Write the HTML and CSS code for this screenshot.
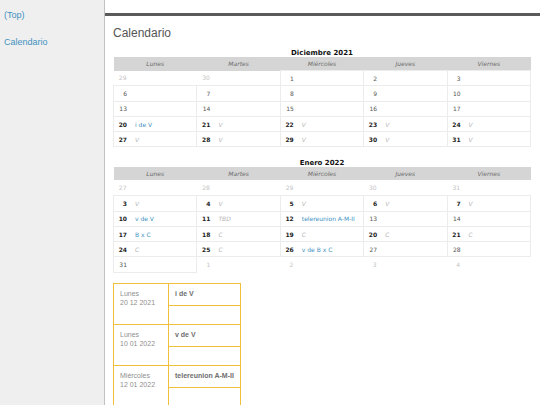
FILE: index.html
```html
<!DOCTYPE html>
<html lang="es">
<head>
<meta charset="utf-8">
<title>Calendario</title>
<link rel="stylesheet" href="styles.css">
</head>
<body>
<nav class="sidebar">
  <a class="side-link top" href="#">(Top)</a>
  <a class="side-link" href="#">Calendario</a>
</nav>
<main class="main">
  <div class="topspace"></div>
  <div class="bar"></div>
  <div class="content">
    <h1 class="title">Calendario</h1>

    <table class="cal">
      <caption>Diciembre 2021</caption>
      <thead>
        <tr><th>Lunes</th><th>Martes</th><th>Miércoles</th><th>Jueves</th><th>Viernes</th></tr>
      </thead>
      <tbody>
        <tr>
          <td class="other"><span class="d">29</span></td>
          <td class="other"><span class="d">30</span></td>
          <td><span class="d">1</span></td>
          <td><span class="d">2</span></td>
          <td><span class="d">3</span></td>
        </tr>
        <tr>
          <td><span class="d">6</span></td>
          <td><span class="d">7</span></td>
          <td><span class="d">8</span></td>
          <td><span class="d">9</span></td>
          <td><span class="d">10</span></td>
        </tr>
        <tr>
          <td><span class="d">13</span></td>
          <td><span class="d">14</span></td>
          <td><span class="d">15</span></td>
          <td><span class="d">16</span></td>
          <td><span class="d">17</span></td>
        </tr>
        <tr>
          <td><span class="d b">20</span><a class="ev" href="#">i de V</a></td>
          <td><span class="d b">21</span><span class="mu">V</span></td>
          <td><span class="d b">22</span><span class="mu">V</span></td>
          <td><span class="d b">23</span><span class="mu">V</span></td>
          <td><span class="d b">24</span><span class="mu">V</span></td>
        </tr>
        <tr>
          <td><span class="d b">27</span><span class="mu">V</span></td>
          <td><span class="d b">28</span><span class="mu">V</span></td>
          <td><span class="d b">29</span><span class="mu">V</span></td>
          <td><span class="d b">30</span><span class="mu">V</span></td>
          <td><span class="d b">31</span><span class="mu">V</span></td>
        </tr>
      </tbody>
    </table>

    <table class="cal">
      <caption>Enero 2022</caption>
      <thead>
        <tr><th>Lunes</th><th>Martes</th><th>Miércoles</th><th>Jueves</th><th>Viernes</th></tr>
      </thead>
      <tbody>
        <tr>
          <td class="other"><span class="d">27</span></td>
          <td class="other"><span class="d">28</span></td>
          <td class="other"><span class="d">29</span></td>
          <td class="other"><span class="d">30</span></td>
          <td class="other"><span class="d">31</span></td>
        </tr>
        <tr>
          <td><span class="d b">3</span><span class="mu">V</span></td>
          <td><span class="d b">4</span><span class="mu">V</span></td>
          <td><span class="d b">5</span><span class="mu">V</span></td>
          <td><span class="d b">6</span><span class="mu">V</span></td>
          <td><span class="d b">7</span><span class="mu">V</span></td>
        </tr>
        <tr>
          <td><span class="d b">10</span><a class="ev" href="#">v de V</a></td>
          <td><span class="d b">11</span><span class="mu">TBD</span></td>
          <td><span class="d b">12</span><a class="ev" href="#">telereunion A-M-II</a></td>
          <td><span class="d">13</span></td>
          <td><span class="d">14</span></td>
        </tr>
        <tr>
          <td><span class="d b">17</span><a class="ev" href="#">B x C</a></td>
          <td><span class="d b">18</span><span class="mu">C</span></td>
          <td><span class="d b">19</span><span class="mu">C</span></td>
          <td><span class="d b">20</span><span class="mu">C</span></td>
          <td><span class="d b">21</span><span class="mu">C</span></td>
        </tr>
        <tr>
          <td><span class="d b">24</span><span class="mu">C</span></td>
          <td><span class="d b">25</span><span class="mu">C</span></td>
          <td><span class="d b">26</span><a class="ev" href="#">v de B x C</a></td>
          <td><span class="d">27</span></td>
          <td><span class="d">28</span></td>
        </tr>
        <tr>
          <td><span class="d">31</span></td>
          <td class="other"><span class="d">1</span></td>
          <td class="other"><span class="d">2</span></td>
          <td class="other"><span class="d">3</span></td>
          <td class="other"><span class="d">4</span></td>
        </tr>
      </tbody>
    </table>

    <table class="list">
      <tbody>
        <tr>
          <td class="when" rowspan="2">Lunes<br>20 12 2021</td>
          <td class="what">i de V</td>
        </tr>
        <tr><td class="blank"></td></tr>
        <tr>
          <td class="when" rowspan="2">Lunes<br>10 01 2022</td>
          <td class="what">v de V</td>
        </tr>
        <tr><td class="blank"></td></tr>
        <tr>
          <td class="when" rowspan="2">Miércoles<br>12 01 2022</td>
          <td class="what">telereunion A-M-II</td>
        </tr>
        <tr><td class="blank"></td></tr>
        <tr>
          <td class="when" rowspan="2"></td>
          <td class="what"></td>
        </tr>
        <tr><td class="blank"></td></tr>
      </tbody>
    </table>
  </div>
</main>
</body>
</html>
```
FILE: styles.css
```css
html, body {
  margin: 0;
  padding: 0;
  height: 100%;
  overflow: hidden;
}

body {
  display: flex;
  font-family: "Liberation Sans", Arial, sans-serif;
  background: #ffffff;
}

.sidebar {
  width: 105px;
  flex: none;
  min-height: 405px;
  background: #efefef;
  border-right: 1px solid #c2c2c2;
  box-sizing: border-box;
  padding: 10px 0 0 4px;
  display: flex;
  flex-direction: column;
  align-items: flex-start;
}

.side-link {
  font-size: 9px;
  line-height: 11px;
  color: #3f92bf;
  text-decoration: none;
}

.side-link.top {
  margin-bottom: 16px;
}

.main {
  flex: 1;
  min-width: 0;
}

.topspace {
  height: 13px;
}

.bar {
  height: 3px;
  background: #5a5a5a;
}

.content {
  padding: 0 9px 0 8px;
}

.title {
  margin: 10px 0 0;
  font-size: 12px;
  line-height: 14px;
  font-weight: normal;
  color: #555555;
}

.cal {
  width: 100%;
  border-collapse: collapse;
  table-layout: fixed;
  margin-top: 9px;
  font-family: "DejaVu Sans", Verdana, sans-serif;
  font-size: 6px;
}

.cal + .cal {
  margin-top: 12px;
}

.cal caption {
  font-size: 7px;
  line-height: 8px;
  font-weight: bold;
  color: #111111;
  text-align: center;
}

.cal th {
  background: #d5d5d5;
  color: #6a6a6a;
  font-style: italic;
  font-weight: normal;
  height: 13px;
  padding: 0;
  line-height: 13px;
}

.cal td {
  height: 15.3px;
  padding: 0;
  border: 1px solid #ececec;
  color: #555555;
  white-space: nowrap;
  overflow: hidden;
  box-sizing: border-box;
}

.cal td.other {
  border: none;
  color: #c4c4c4;
}

.d {
  display: inline-block;
  width: 10px;
  padding-left: 3px;
  text-align: right;
  margin-right: 8px;
}

.d.b {
  font-weight: bold;
  color: #222222;
}

.ev {
  color: #3f92bf;
  text-decoration: none;
}

.mu {
  color: #b4b4b4;
  font-style: italic;
}

.list {
  margin-top: 10px;
  border-collapse: collapse;
  font-size: 7px;
  line-height: 9px;
}

.list td {
  border: 1px solid #f0c03c;
  padding: 0;
  vertical-align: top;
}

.list .when {
  width: 55px;
  height: 40px;
  box-sizing: border-box;
  padding: 5px 0 0 6px;
  color: #8f8f8f;
}

.list .what {
  width: 72px;
  box-sizing: border-box;
  height: 22px;
  padding: 5px 0 0 6px;
  font-weight: bold;
  color: #6e6e6e;
}

.list .blank {
  height: 18px;
}
```
